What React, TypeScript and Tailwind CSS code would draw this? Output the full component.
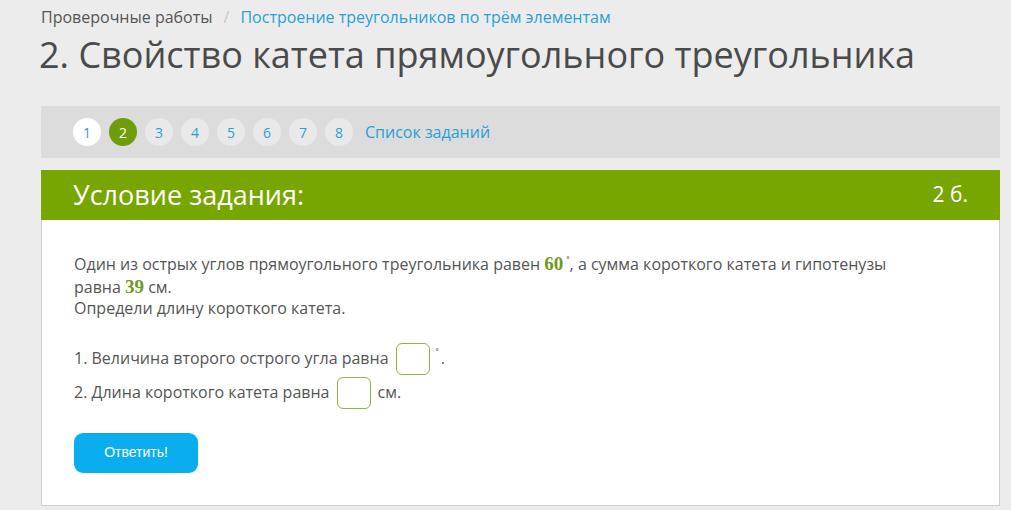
import React from 'react';

const pages = ['1', '2', '3', '4', '5', '6', '7', '8'];

const Num = ({ children }: { children: React.ReactNode }) => (
  <span className="font-['Liberation_Serif',serif] text-[19px] font-semibold text-[#6b9a1e]">{children}</span>
);

const Box = () => (
  <span className="inline-block w-[34px] h-[32px] align-middle border border-[#8fb640] rounded-[6px] bg-white mx-[7px]" />
);

export default function App() {
  return (
    <div className="min-h-[510px] bg-[#ececec] font-['Open_Sans',sans-serif] text-[#555]">
      <div className="px-[41px] pr-[11px]">
        {/* breadcrumb */}
        <div className="pt-[6px] flex items-center text-[16px] leading-[22px]">
          <span className="text-[#555]">Проверочные работы</span>
          <span className="text-[#c8c8c8] mx-[11px]">/</span>
          <span className="text-[#2a9fd6]">Построение треугольников по трём элементам</span>
        </div>
        <h1 className="text-[36px] leading-[50px] text-[#4a4a4a] mt-[2px] -ml-[2px]">
          2. Свойство катета прямоугольного треугольника
        </h1>

        {/* pager */}
        <div className="mt-[26px] h-[52px] bg-[#dcdcdc] flex items-center pl-[32px] gap-[8px]">
          {pages.map((p) => (
            <span
              key={p}
              className={
                p === '1'
                  ? 'w-[28px] h-[28px] rounded-full bg-white text-[#2a9fd6] text-[14px] flex items-center justify-center'
                  : p === '2'
                  ? 'w-[28px] h-[28px] rounded-full bg-[#6f9d0a] text-white text-[14px] flex items-center justify-center'
                  : 'w-[28px] h-[28px] rounded-full bg-[#e9e9e9] text-[#2a9fd6] text-[14px] flex items-center justify-center'
              }
            >
              {p}
            </span>
          ))}
          <span className="text-[16px] text-[#2a9fd6] ml-[4px]">Список заданий</span>
        </div>

        {/* task */}
        <div className="mt-[12px]">
          <div className="h-[50px] bg-[#77a600] flex items-center justify-between px-[32px] text-white">
            <span className="text-[27px]">Условие задания:</span>
            <span className="text-[21px]">2 б.</span>
          </div>
          <div className="bg-white border border-[#cfcfcf] border-t-0 px-[32px] pt-[33px] pb-[32px] text-[16px] leading-[21.5px]">
            <p>
              Один из острых углов прямоугольного треугольника равен <Num>60</Num>
              <sup className="text-[11px] ml-[3px]">˚</sup>, а сумма короткого катета и гипотенузы
              <br />
              равна <Num>39</Num> см.
              <br />
              Определи длину короткого катета.
            </p>
            <div className="mt-[22px] flex items-center h-[34px]">
              1. Величина второго острого угла равна
              <Box />
              <sup className="text-[11px] -ml-[1px] mr-[2px]">˚</sup>.
            </div>
            <div className="flex items-center h-[34px]">
              2. Длина короткого катета равна
              <Box />
              см.
            </div>
            <button className="mt-[23px] w-[124px] h-[40px] rounded-[9px] bg-[#0aaeee] text-white text-[14px] font-['Liberation_Sans',sans-serif]">
              Ответить!
            </button>
          </div>
        </div>
      </div>
    </div>
  );
}
